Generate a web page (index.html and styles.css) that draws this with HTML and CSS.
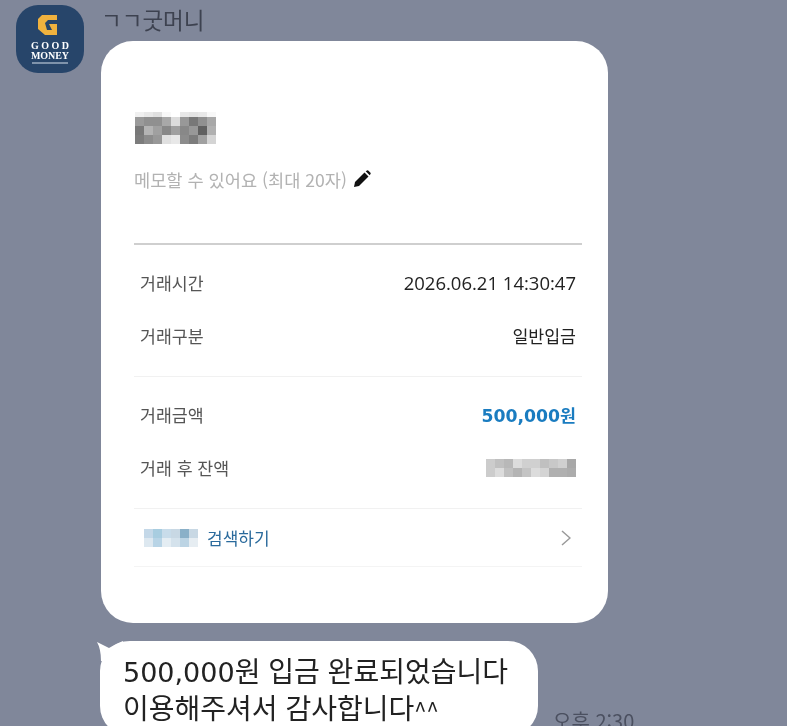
FILE: index.html
```html
<!DOCTYPE html>
<html lang="ko">
<head>
    <meta charset="UTF-8">
    <meta name="viewport" content="width=device-width, initial-scale=1.0">
    <title>굿머니 입금 알림</title>
    <link rel="stylesheet" href="styles.css">
</head>
<body>
    <div class="chat">
        <svg class="avatar" width="68" height="68" viewBox="0 0 68 68">
            <rect width="68" height="68" rx="22" fill="#27456a"/>
            <path d="M26 10 H41 V15 H32 L29 18 L31 25 H36 L33 19 H41 V30 H29 L22 24 V14 Z" fill="#f0b23e"/>
            <text class="logo-word" x="34" y="43.5" textLength="38">GOOD</text>
            <text class="logo-word" x="34" y="53.5" textLength="38">MONEY</text>
            <rect x="16" y="57" width="36" height="2" fill="#7f93ab"/>
        </svg>
        <div class="thread">
            <div class="sender">ㄱㄱ굿머니</div>
            <div class="card">
                <svg class="mosaic title-mosaic" width="81" height="32" viewBox="0 0 81 32">
                    <g>
                        <rect x="0" y="0" width="9" height="5" fill="#f0f0f0"/><rect x="9" y="0" width="9" height="5" fill="#e8e8e8"/><rect x="18" y="0" width="9" height="5" fill="#e0e0e0"/><rect x="27" y="0" width="9" height="5" fill="#f8f8f8"/><rect x="45" y="0" width="9" height="5" fill="#e8e8e8"/><rect x="54" y="0" width="9" height="5" fill="#e4e4e4"/><rect x="63" y="0" width="9" height="5" fill="#e8e8e8"/><rect x="72" y="0" width="9" height="5" fill="#f8f8f8"/>
                        <rect x="0" y="5" width="9" height="9" fill="#9a9a9a"/><rect x="9" y="5" width="9" height="9" fill="#909090"/><rect x="18" y="5" width="9" height="9" fill="#909090"/><rect x="27" y="5" width="9" height="9" fill="#a8a8a8"/><rect x="36" y="5" width="9" height="9" fill="#dcdcdc"/><rect x="45" y="5" width="9" height="9" fill="#989898"/><rect x="54" y="5" width="9" height="9" fill="#787878"/><rect x="63" y="5" width="9" height="9" fill="#909090"/><rect x="72" y="5" width="9" height="9" fill="#a8a8a8"/>
                        <rect x="0" y="14" width="9" height="9" fill="#787878"/><rect x="9" y="14" width="9" height="9" fill="#b4b4b4"/><rect x="18" y="14" width="9" height="9" fill="#a0a0a0"/><rect x="27" y="14" width="9" height="9" fill="#888888"/><rect x="36" y="14" width="9" height="9" fill="#a0a0a0"/><rect x="45" y="14" width="9" height="9" fill="#888888"/><rect x="54" y="14" width="9" height="9" fill="#989898"/><rect x="63" y="14" width="9" height="9" fill="#606060"/><rect x="72" y="14" width="9" height="9" fill="#b0b0b0"/>
                        <rect x="0" y="23" width="9" height="9" fill="#7c7c7c"/><rect x="9" y="23" width="9" height="9" fill="#8c8c8c"/><rect x="18" y="23" width="9" height="9" fill="#989898"/><rect x="27" y="23" width="9" height="9" fill="#e0e0e0"/><rect x="36" y="23" width="9" height="9" fill="#e8e8e8"/><rect x="45" y="23" width="9" height="9" fill="#8c8c8c"/><rect x="54" y="23" width="9" height="9" fill="#7c7c7c"/><rect x="63" y="23" width="9" height="9" fill="#a0a0a0"/><rect x="72" y="23" width="9" height="9" fill="#d4d4d4"/>
                    </g>
                </svg>
                <div class="memo">
                    <span>메모할 수 있어요 (최대 20자)</span>
                    <svg width="18" height="18" viewBox="0 0 18 18">
                        <path d="M1 17 L2 12 L11.5 2.5 L15.5 6.5 L6 16 Z" fill="#111"/>
                        <path d="M12.7 1.3 L14 0.4 Q14.6 0 15.2 0.5 L17.5 2.8 Q18 3.4 17.5 4 L16.7 5.3 Z" fill="#111"/>
                    </svg>
                </div>
                <div class="rule-strong"></div>
                <div class="group">
                    <div class="row"><span class="label">거래시간</span><span class="value date">2026.06.21 14:30:47</span></div>
                    <div class="row"><span class="label">거래구분</span><span class="value">일반입금</span></div>
                </div>
                <div class="group">
                    <div class="row"><span class="label">거래금액</span><span class="value amount"><span class="amount-num">500,000</span>원</span></div>
                    <div class="row">
                        <span class="label">거래 후 잔액</span>
                        <svg class="mosaic" width="90" height="18" viewBox="0 0 90 18">
                            <rect x="0" y="0" width="9" height="9" fill="#cccccc"/><rect x="9" y="0" width="9" height="9" fill="#c0c0c0"/><rect x="18" y="0" width="9" height="9" fill="#b8b8b8"/><rect x="27" y="0" width="9" height="9" fill="#dcdcdc"/><rect x="36" y="0" width="9" height="9" fill="#d0d0d0"/><rect x="45" y="0" width="9" height="9" fill="#d0d0d0"/><rect x="54" y="0" width="9" height="9" fill="#c0c0c0"/><rect x="63" y="0" width="9" height="9" fill="#c8c8c8"/><rect x="72" y="0" width="9" height="9" fill="#d0d0d0"/><rect x="81" y="0" width="9" height="9" fill="#a8a8a8"/>
                            <rect x="0" y="9" width="9" height="9" fill="#cccccc"/><rect x="9" y="9" width="9" height="9" fill="#dcdcdc"/><rect x="18" y="9" width="9" height="9" fill="#c0c0c0"/><rect x="27" y="9" width="9" height="9" fill="#b4b4b4"/><rect x="36" y="9" width="9" height="9" fill="#c4c4c4"/><rect x="45" y="9" width="9" height="9" fill="#dcdcdc"/><rect x="54" y="9" width="9" height="9" fill="#d4d4d4"/><rect x="63" y="9" width="9" height="9" fill="#b0b0b0"/><rect x="72" y="9" width="9" height="9" fill="#b0b0b0"/><rect x="81" y="9" width="9" height="9" fill="#acacac"/>
                        </svg>
                    </div>
                </div>
                <div class="search">
                    <svg class="mosaic" width="54" height="18" viewBox="0 0 54 18">
                        <rect x="0" y="0" width="9" height="9" fill="#c4d8e8"/><rect x="9" y="0" width="9" height="9" fill="#a8cde0"/><rect x="18" y="0" width="9" height="9" fill="#c8dcea"/><rect x="27" y="0" width="9" height="9" fill="#c8d8e4"/><rect x="36" y="0" width="9" height="9" fill="#8ab0c8"/><rect x="45" y="0" width="9" height="9" fill="#c8d8e4"/>
                        <rect x="0" y="9" width="9" height="9" fill="#dde8f0"/><rect x="9" y="9" width="9" height="9" fill="#b8d4e6"/><rect x="18" y="9" width="9" height="9" fill="#e4edf3"/><rect x="27" y="9" width="9" height="9" fill="#d4e2ec"/><rect x="36" y="9" width="9" height="9" fill="#bcd4e4"/><rect x="45" y="9" width="9" height="9" fill="#e6edf2"/>
                    </svg>
                    <span class="search-text">검색하기</span>
                    <svg class="chevron" width="10" height="16" viewBox="0 0 10 16">
                        <path d="M1 1 L9 8 L1 15" fill="none" stroke="#999" stroke-width="1.5"/>
                    </svg>
                </div>
            </div>
            <div class="message">
                <div class="bubble">
                    <svg class="tail" width="30" height="20" viewBox="0 0 30 20">
                        <path d="M0 1 Q6 4 12 7 Q18 3 26 0 L30 20 H4 Q4 8 0 1 Z" fill="#fff"/>
                    </svg>
                    <span class="bubble-num">500,000</span>원 입금 완료되었습니다<br>이용해주셔서 감사합니다<span class="caret">^^</span>
                </div>
                <span class="time">오후 2:30</span>
            </div>
        </div>
    </div>
</body>
</html>
```

FILE: styles.css
```css
html, body {
    margin: 0;
    height: 726px;
    overflow: hidden;
}
body {
    background-color: #80879a;
    font-family: "Noto Sans CJK KR", "Noto Sans", sans-serif;
}
.chat {
    display: flex;
    align-items: flex-start;
    padding: 5px 0 0 16px;
    filter: blur(0.45px);
}
.avatar {
    flex: none;
    display: block;
}
.logo-word {
    font-family: "Liberation Serif", serif;
    font-size: 10px;
    font-weight: bold;
    fill: #fff;
    text-anchor: middle;
}
.thread {
    margin-left: 17px;
    width: 507px;
}
.sender {
    height: 36px;
    font-size: 22.5px;
    line-height: 29px;
    color: #3d4250;
}
.card {
    box-sizing: border-box;
    height: 582px;
    padding: 71px 26px 0 33px;
    background-color: #fff;
    border-radius: 32px;
}
.mosaic {
    display: block;
    flex: none;
}
.title-mosaic {
    margin-left: 1px;
}
.memo {
    display: flex;
    align-items: center;
    gap: 6px;
    height: 24px;
    margin-top: 23px;
    font-size: 17.6px;
    color: #b2b2b2;
}
.rule-strong {
    height: 2px;
    margin-top: 52px;
    background-color: #cfcfcf;
}
.group {
    box-sizing: border-box;
    height: 132px;
    padding-top: 11px;
    border-bottom: 1px solid #f1f1f1;
}
.row {
    display: flex;
    justify-content: space-between;
    align-items: center;
    height: 53px;
    padding: 0 6px;
}
.label {
    font-size: 17.3px;
    color: #555;
}
.value {
    font-size: 17.3px;
    color: #222;
}
.date {
    font-family: "Open Sans", sans-serif;
    font-size: 18.5px;
}
.amount {
    font-weight: 700;
    color: #1a7cc0;
}
.amount-num {
    font-family: "DejaVu Sans", sans-serif;
}
.search {
    display: flex;
    align-items: center;
    height: 57px;
    padding: 0 11px 0 10px;
    border-bottom: 1px solid #f4f4f4;
}
.search-text {
    margin-left: 9px;
    font-size: 17px;
    color: #2a6a9c;
}
.chevron {
    margin-left: auto;
}
.message {
    display: flex;
    align-items: flex-end;
    margin-top: 18px;
}
.bubble {
    position: relative;
    flex: none;
    box-sizing: border-box;
    width: 438px;
    height: 95px;
    margin-left: -1px;
    padding: 12px 0 0 23px;
    background-color: #fff;
    border-radius: 30px;
    font-size: 28px;
    line-height: 35px;
    color: #222;
    white-space: nowrap;
}
.bubble-num {
    font-family: "DejaVu Sans", sans-serif;
    font-size: 27px;
}
.caret {
    font-size: 22px;
}
.tail {
    position: absolute;
    left: -3px;
    top: 0;
}
.time {
    margin: 0 0 2px 15px;
    font-size: 20px;
    line-height: 26px;
    color: #4b5060;
    white-space: nowrap;
}
```
